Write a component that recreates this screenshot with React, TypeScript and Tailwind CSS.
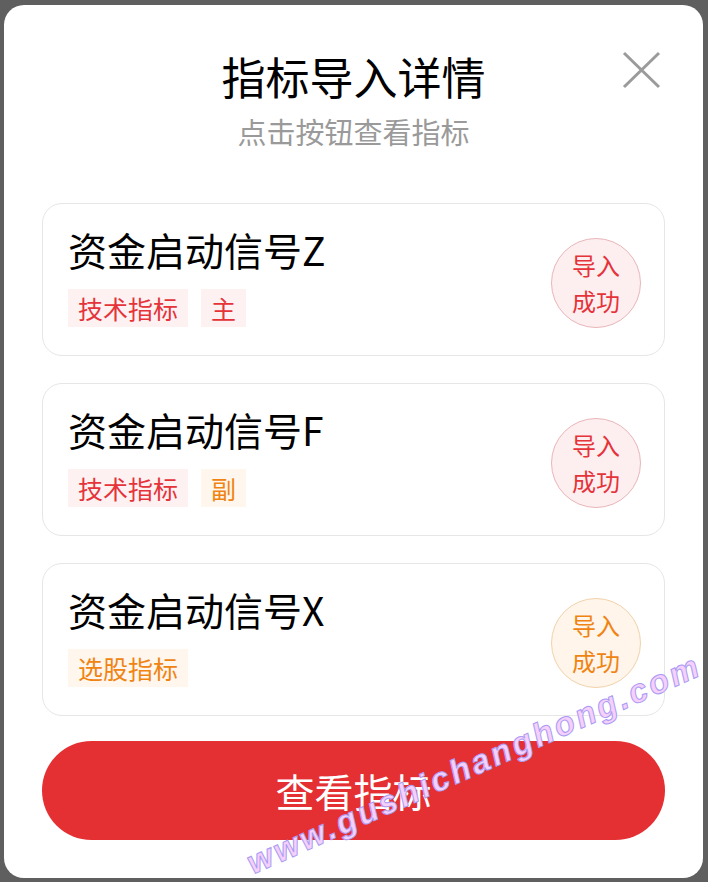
import React from "react";

type Indicator = {
  name: string;
  tags: { label: string; tone: "red" | "orange" }[];
  tone: "red" | "orange";
};

const indicators: Indicator[] = [
  {
    name: "资金启动信号Z",
    tags: [
      { label: "技术指标", tone: "red" },
      { label: "主", tone: "red" },
    ],
    tone: "red",
  },
  {
    name: "资金启动信号F",
    tags: [
      { label: "技术指标", tone: "red" },
      { label: "副", tone: "orange" },
    ],
    tone: "red",
  },
  {
    name: "资金启动信号X",
    tags: [{ label: "选股指标", tone: "orange" }],
    tone: "orange",
  },
];

const font = "font-['Noto_Sans_CJK_SC','Noto_Sans',sans-serif]";

const Tag = ({ label, tone }: { label: string; tone: "red" | "orange" }) => (
  <span
    className={
      tone === "red"
        ? "h-[38px] px-[10px] flex items-center text-[25px] leading-none bg-[#fdf1f1] text-[#e5333a]"
        : "h-[38px] px-[10px] flex items-center text-[25px] leading-none bg-[#fff6ed] text-[#ef8412]"
    }
  >
    {label}
  </span>
);

const Badge = ({ tone }: { tone: "red" | "orange" }) => (
  <div
    className={
      tone === "red"
        ? "w-[90px] h-[90px] rounded-full border border-[#e9b5b9] bg-[#fdeff0] text-[#e5333a] flex flex-col items-center justify-center text-[24px] leading-[36px] mt-[6px]"
        : "w-[90px] h-[90px] rounded-full border border-[#f1d2ab] bg-[#fff5ea] text-[#ef8412] flex flex-col items-center justify-center text-[24px] leading-[36px] mt-[6px]"
    }
  >
    <span>导入</span>
    <span>成功</span>
  </div>
);

const IndicatorCard = ({ name, tags, tone }: Indicator) => (
  <div className="h-[153px] rounded-[20px] border border-[#e6e6e6] bg-white flex items-center justify-between pl-[25px] pr-[23px]">
    <div className="flex flex-col">
      <h3 className="text-[39px] leading-none text-black -mt-[2px]">{name}</h3>
      <div className="flex gap-[13px] mt-[20px]">
        {tags.map((t) => (
          <Tag key={t.label} label={t.label} tone={t.tone} />
        ))}
      </div>
    </div>
    <Badge tone={tone} />
  </div>
);

export default function App() {
  return (
    <div className={`w-[708px] h-[882px] bg-[#5f5f5f] pt-[5px] pl-[4px] overflow-hidden relative ${font}`}>
      <div className="relative w-[699px] h-[873px] bg-white rounded-[20px] flex flex-col px-[38px] pt-[49px]">
        <button className="absolute top-[45px] right-[42px] w-[40px] h-[40px]" aria-label="关闭">
          <svg viewBox="0 0 40 40" className="w-full h-full" fill="none" stroke="#9b9b9b" strokeWidth="3">
            <path d="M3 3 L38 37 M38 3 L3 37" />
          </svg>
        </button>
        <h1 className="text-center text-[44px] leading-none text-black">指标导入详情</h1>
        <p className="text-center text-[29px] leading-none text-[#9a9a9a] mt-[19px]">点击按钮查看指标</p>
        <div className="flex flex-col gap-[27px] mt-[57px]">
          {indicators.map((it) => (
            <IndicatorCard key={it.name} {...it} />
          ))}
        </div>
        <button className="mt-[25px] h-[99px] w-full rounded-full bg-[#e53033] text-white text-[39px] leading-none">
          查看指标
        </button>
      </div>
      <div className="absolute left-[228px] top-[752px] w-[470px] text-center -rotate-[24deg] text-[33px] font-bold italic tracking-[3px] leading-none text-[#f6d0fb] [-webkit-text-stroke:1px_#a99cf3] font-['Liberation_Sans',sans-serif] pointer-events-none">
        www.gushichanghong.com
      </div>
    </div>
  );
}
